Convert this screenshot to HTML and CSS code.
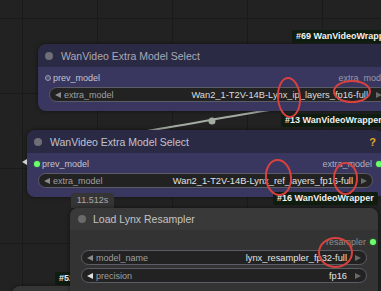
FILE: index.html
```html
<!DOCTYPE html>
<html>
<head>
<meta charset="utf-8">
<link rel="stylesheet" href="styles.css">
</head>
<body>
<div class="canvas">
  <svg class="link" width="381" height="291" viewBox="0 0 381 291">
    <path d="M140 132 C180 126, 230 116, 270 110" fill="none" stroke="#a3aca3" stroke-width="2"/>
    <circle cx="212" cy="121" r="3.5" fill="#a3aca3"/>
  </svg>

  <div class="node node-a">
    <div class="title"><span class="tdot"></span><span class="ttext">WanVideo Extra Model Select</span></div>
    <div class="body">
      <div class="slots">
        <div class="slot-in"><span class="sdot hollow"></span><span>prev_model</span></div>
        <div class="slot-out"><span>extra_model</span></div>
      </div>
      <div class="widget">
        <span class="arr l"></span>
        <span class="wlabel">extra_model</span>
        <span class="wvalue">Wan2_1-T2V-14B-Lynx_ip_layers_fp16-full</span>
        <span class="arr r"></span>
      </div>
    </div>
  </div>

  <div class="badge badge-69">#69 WanVideoWrapper</div>
  <div class="badge badge-13">#13 WanVideoWrapper</div>

  <div class="node node-b">
    <div class="title"><span class="tdot"></span><span class="ttext">WanVideo Extra Model Select</span><span class="help">?</span></div>
    <div class="body">
      <div class="slots">
        <div class="slot-in"><span class="sdot green"></span><span>prev_model</span></div>
        <div class="slot-out"><span>extra_model</span><span class="sdot green"></span></div>
      </div>
      <div class="widget">
        <span class="arr l"></span>
        <span class="wlabel">extra_model</span>
        <span class="wvalue">Wan2_1-T2V-14B-Lynx_ref_layers_fp16-full</span>
        <span class="arr r"></span>
      </div>
    </div>
  </div>
  <span class="collapse-arrow"></span>

  <div class="badge badge-16">#16 WanVideoWrapper</div>
  <div class="badge badge-5">#52</div>
  <div class="node node-d"></div>

  <div class="timing">11.512s</div>
  <div class="node node-c">
    <div class="title"><span class="tdot"></span><span class="ttext">Load Lynx Resampler</span></div>
    <div class="body">
      <div class="slots">
        <div class="slot-in"></div>
        <div class="slot-out"><span>resampler</span><span class="sdot green"></span></div>
      </div>
      <div class="widget">
        <span class="arr l"></span>
        <span class="wlabel">model_name</span>
        <span class="wvalue">lynx_resampler_fp32-full</span>
        <span class="arr r"></span>
      </div>
      <div class="widget gap">
        <span class="arr l bright"></span>
        <span class="wlabel">precision</span>
        <span class="wvalue">fp16</span>
        <span class="arr r"></span>
      </div>
    </div>
  </div>

  <div class="mark m1"></div>
  <div class="mark m2"></div>
  <div class="mark m3"></div>
  <div class="mark m4"></div>
  <div class="mark m5"></div>
</div>
</body>
</html>
```

FILE: styles.css
```css
html, body {
  margin: 0;
  padding: 0;
  background: #1e1e1e;
}
.canvas {
  position: relative;
  width: 381px;
  height: 291px;
  overflow: hidden;
  background-color: #222222;
  background-image:
    linear-gradient(to right, #1a1a1a 1px, transparent 1px),
    linear-gradient(to bottom, #1a1a1a 1px, transparent 1px);
  background-size: 75px 75px;
  background-position: 22px 18px;
  font-family: "Liberation Sans", Arial, sans-serif;
}
.link {
  position: absolute;
  left: 0;
  top: 0;
}
.node {
  position: absolute;
  border-radius: 8px;
  overflow: hidden;
  box-shadow: 0 0 4px rgba(0,0,0,0.5);
}
.title {
  height: 23px;
  display: flex;
  align-items: center;
  padding-left: 7px;
  font-size: 10.5px;
}
.tdot {
  width: 8px;
  height: 8px;
  border-radius: 50%;
  background: #6e6e78;
  margin-right: 8px;
  flex: none;
}
.ttext {
  flex: 1;
  white-space: nowrap;
}
.help {
  color: #e0a526;
  font-weight: bold;
  font-size: 11px;
  margin-right: 8px;
}
.body {
  padding: 3px 11px 9px 11px;
  display: flex;
  flex-direction: column;
}
.slots {
  height: 15px;
  display: flex;
  align-items: center;
  justify-content: space-between;
  font-size: 9px;
  margin-left: -4px;
  margin-right: -9px;
}
.slot-in, .slot-out {
  display: flex;
  align-items: center;
  white-space: nowrap;
}
.slot-in { color: #c4c4cc; }
.slot-out { color: #9a9aa6; }
.slot-out .sdot { margin-left: 4px; margin-right: 0; }
.sdot {
  width: 6px;
  height: 6px;
  border-radius: 50%;
  margin-right: 2px;
  flex: none;
  box-sizing: border-box;
}
.sdot.hollow {
  border: 1.5px solid #9c9cb0;
  background: #55527a;
}
.sdot.green {
  background: #6cff6c;
  box-shadow: 0 0 2px #3a9a3a;
}
.widget {
  margin-top: 2px;
  height: 15px;
  box-sizing: border-box;
  border: 1px solid #5c5c66;
  border-radius: 8px;
  background: #222222;
  display: flex;
  align-items: center;
  padding: 0 5px 0 5px;
  font-size: 9px;
  white-space: nowrap;
}
.widget.gap { margin-top: 3px; }
.wlabel {
  color: #a0a0a0;
  margin-left: 3px;
  flex: 1;
}
.wvalue {
  color: #e2e2e2;
  margin-right: 8px;
  font-size: 9.3px;
}
.arr {
  width: 0;
  height: 0;
  border-top: 3.5px solid transparent;
  border-bottom: 3.5px solid transparent;
  flex: none;
}
.arr.l { border-right: 6px solid #8a8a8a; }
.arr.l.bright { border-right-color: #e0e0e0; }
.arr.r { border-left: 6px solid #6a6a6a; }

.node-a {
  left: 38px;
  top: 44px;
  width: 361px;
  color: #a9a9b4;
}
.node-a .title { background: #2b2a45; }
.node-a .body { background: #393660; }
.node-a .slots { margin-right: 0; }
.node-a .wvalue { color: #dcdcdc; }

.node-b {
  left: 27px;
  top: 130px;
  width: 357px;
  color: #c2c2cc;
}
.node-b .title { background: #2b2a45; }
.node-b .body { background: #393660; }
.node-b .slot-out { color: #b0b0bc; }

.node-c {
  left: 70px;
  top: 208px;
  width: 308px;
  height: 100px;
  color: #c4c4c4;
  background: #333333;
}
.node-c .title { background: #393939; height: 22px; padding-left: 8px; }
.node-c .tdot { background: #6a6a6a; margin-right: 7px; }
.node-c .body { padding-top: 4px; }
.node-c .slot-out { color: #8e8e8e; }
.node-c .widget { margin-top: 1px; }
.node-c .widget.gap { margin-top: 3px; }

.node-d {
  left: 12px;
  top: 286px;
  width: 120px;
  height: 40px;
  background: #353535;
}

.collapse-arrow {
  position: absolute;
  left: 22px;
  top: 159px;
  width: 0;
  height: 0;
  border-top: 3px solid transparent;
  border-bottom: 3px solid transparent;
  border-right: 5px solid #d0d0d0;
}

.badge {
  position: absolute;
  height: 13px;
  line-height: 13px;
  padding: 0 4px;
  background: #0f1c10;
  color: #f0f0f0;
  font-size: 9px;
  font-weight: bold;
  white-space: nowrap;
  border-radius: 2px;
}
.badge-69 { left: 292px; top: 30px; }
.badge-13 { left: 281px; top: 114px; }
.badge-16 { left: 273px; top: 192px; }
.badge-5 { left: 55px; top: 272px; }

.timing {
  position: absolute;
  left: 71px;
  top: 193px;
  width: 43px;
  height: 15px;
  background: #353535;
  border-radius: 4px 4px 0 0;
  color: #a8a8a8;
  font-size: 9px;
  line-height: 15px;
  text-align: center;
}

.mark {
  position: absolute;
  border: 2.5px solid #d8413d;
  border-radius: 50%;
  box-sizing: border-box;
}
.m1 { left: 277px; top: 77px; width: 24px; height: 41px; transform: rotate(-4deg); }
.m2 { left: 333px; top: 80px; width: 38px; height: 23px; }
.m3 { left: 265px; top: 159px; width: 27px; height: 37px; transform: rotate(-6deg); }
.m4 { left: 333px; top: 162px; width: 25px; height: 33px; }
.m5 { left: 318px; top: 237px; width: 35px; height: 31px; }
```
